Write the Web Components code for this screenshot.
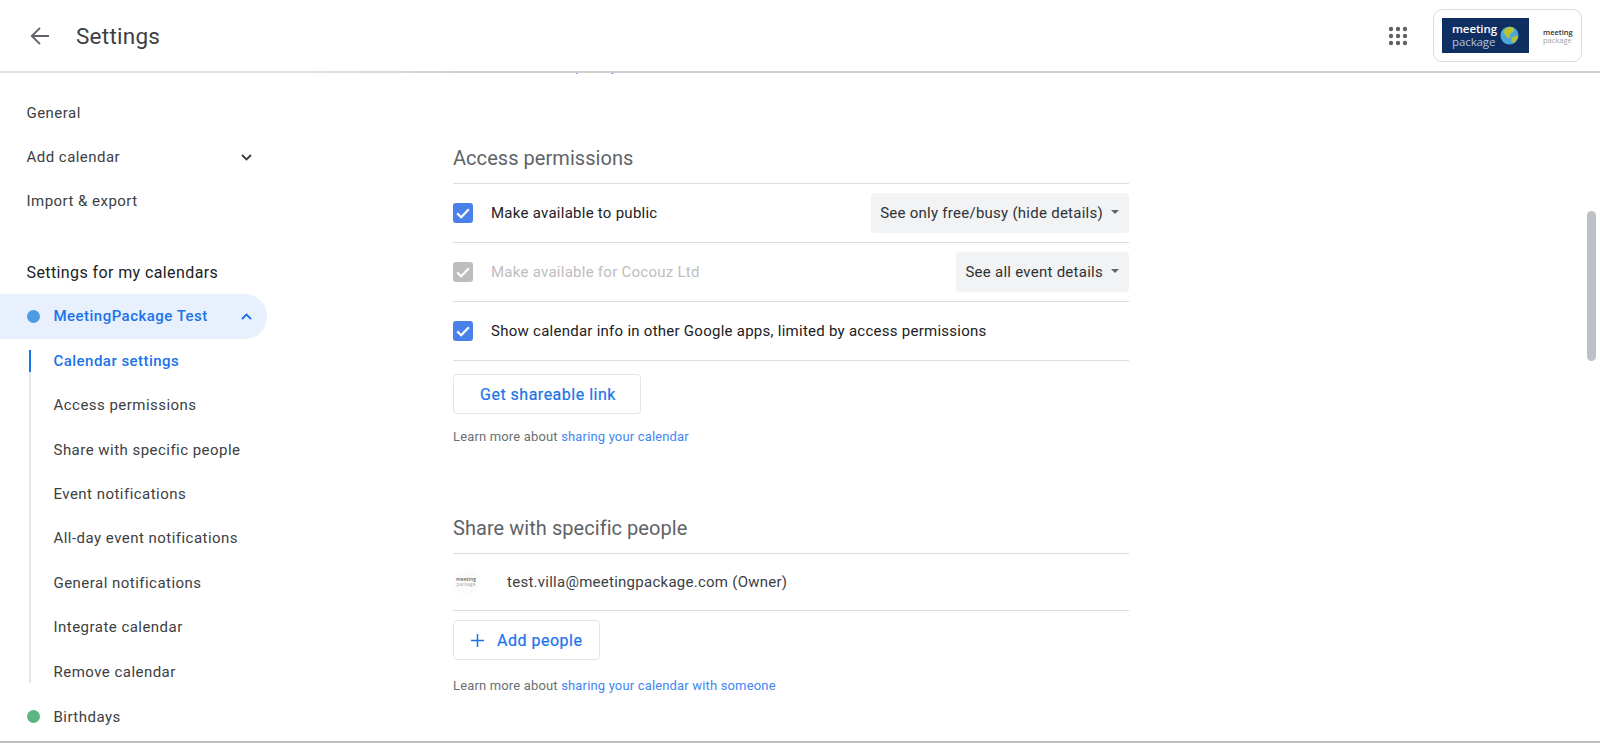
<!DOCTYPE html>
<html lang="en">
<head>
<meta charset="utf-8">
<title>Settings</title>
<style>
    html, body { margin: 0; height: 100%; overflow: hidden; background: #fff; }
    body { font-family: Roboto, "Liberation Sans", sans-serif; }
</style>
</head>
<body>
<settings-app>
    <settings-header slot="header"></settings-header>
    <settings-sidebar slot="sidebar">
        <nav-item>General</nav-item>
        <nav-item chevron="down">Add calendar</nav-item>
        <nav-item>Import &amp; export</nav-item>
        <nav-title>Settings for my calendars</nav-title>
        <nav-item dot="#4b9ce2" chevron="up" active>MeetingPackage Test</nav-item>
        <nav-group>
            <nav-item sub current>Calendar settings</nav-item>
            <nav-item sub>Access permissions</nav-item>
            <nav-item sub>Share with specific people</nav-item>
            <nav-item sub>Event notifications</nav-item>
            <nav-item sub>All-day event notifications</nav-item>
            <nav-item sub>General notifications</nav-item>
            <nav-item sub>Integrate calendar</nav-item>
            <nav-item sub>Remove calendar</nav-item>
        </nav-group>
        <nav-item dot="#5ab580">Birthdays</nav-item>
    </settings-sidebar>
    <settings-main slot="main">
        <settings-section heading="Access permissions" style="margin-top:67px">
            <perm-row>
                <g-check slot="check" checked></g-check>
                Make available to public
                <g-select slot="action">See only free/busy (hide details)</g-select>
            </perm-row>
            <perm-row disabled>
                <g-check slot="check" disabled></g-check>
                Make available for Cocouz Ltd
                <g-select slot="action">See all event details</g-select>
            </perm-row>
            <perm-row>
                <g-check slot="check" checked></g-check>
                Show calendar info in other Google apps, limited by access permissions
            </perm-row>
            <g-button>Get shareable link</g-button>
            <learn-more gap="14">sharing your calendar</learn-more>
        </settings-section>
        <settings-section heading="Share with specific people">
            <owner-row>test.villa@meetingpackage.com (Owner)</owner-row>
            <g-button plus>Add people</g-button>
            <learn-more gap="16.5">sharing your calendar with someone</learn-more>
        </settings-section>
    </settings-main>
</settings-app>

<script>
class SettingsApp extends HTMLElement {
    constructor() {
        super();
        this.attachShadow({mode: "open"}).innerHTML = `
        <style>
            :host {
                display: flex;
                flex-direction: column;
                height: 743px;
                box-sizing: border-box;
                border-bottom: 2px solid #bdbdbd;
                position: relative;
                overflow: hidden;
            }
            .body { flex: 1; display: flex; min-height: 0; }
            .thumb {
                position: absolute;
                left: 1587px;
                top: 211px;
                width: 9px;
                height: 150px;
                border-radius: 5px;
                background: #bdc1c6;
            }
        </style>
        <slot name="header"></slot>
        <div class="body">
            <slot name="sidebar"></slot>
            <slot name="main"></slot>
        </div>
        <div class="thumb"></div>`;
    }
}

class SettingsHeader extends HTMLElement {
    constructor() {
        super();
        this.attachShadow({mode: "open"}).innerHTML = `
        <style>
            :host {
                display: flex;
                align-items: center;
                height: 71px;
                flex: none;
                padding: 0 18px 0 30px;
                border-bottom: 2px solid;
                border-image: linear-gradient(90deg, #e3e3e3 0%, #e3e3e3 18%, #cfcfcf 30%, #cfcfcf 100%) 1;
            }
            .back { width: 20px; height: 20px; margin-right: 26px; }
            h1 {
                margin: 0;
                flex: 1;
                font: 400 22.5px/30px Roboto, sans-serif;
                letter-spacing: .25px;
                color: #3c4043;
            }
            .apps { width: 20px; height: 20px; margin-right: 25px; }
            .account {
                width: 149px;
                height: 53px;
                box-sizing: border-box;
                border: 1px solid #dadce0;
                border-radius: 9px;
                display: flex;
                align-items: center;
                padding-left: 8px;
            }
            .brand {
                width: 87px;
                height: 35px;
                background: #0f2f63;
                display: flex;
                align-items: center;
                padding-left: 10px;
                box-sizing: border-box;
                gap: 3px;
            }
            .brand svg { width: 19px; height: 19px; flex: none; }
            .words { font: 600 11.5px/12.5px "Open Sans", sans-serif; color: #fff; letter-spacing: -.1px; }
            .words span { display: block; font-weight: 400; color: #b4c2d8; }
            .small {
                margin-left: 14px;
                font: 600 7.5px/8px "Open Sans", sans-serif;
                color: #333;
            }
            .small span { display: block; font-weight: 400; color: #a5a5a5; }
        </style>
        <svg class="back" viewBox="0 0 20 20" fill="none" stroke="#5f6368" stroke-width="1.9">
            <path d="M19 10H2.5M10 1.8L1.8 10l8.2 8.2"/>
        </svg>
        <h1>Settings</h1>
        <svg class="apps" viewBox="0 0 20 20" fill="#5f6368">
            <circle cx="3" cy="3" r="2.2"/><circle cx="10" cy="3" r="2.2"/><circle cx="17" cy="3" r="2.2"/>
            <circle cx="3" cy="10" r="2.2"/><circle cx="10" cy="10" r="2.2"/><circle cx="17" cy="10" r="2.2"/>
            <circle cx="3" cy="17" r="2.2"/><circle cx="10" cy="17" r="2.2"/><circle cx="17" cy="17" r="2.2"/>
        </svg>
        <div class="account">
            <div class="brand">
                <div class="words">meeting<span>package</span></div>
                <svg viewBox="0 0 20 20">
                    <circle cx="10" cy="10" r="9.5" fill="#4ea6d8"/>
                    <path d="M3 6c2-4 7-6 11-4.5L15 5l-3 3-2 1 1 3-3 1-2-3zM12 12l6-2 1 2-4 6-3-2z" fill="#b4c23c"/>
                </svg>
            </div>
            <div class="small">meeting<span>package</span></div>
        </div>`;
    }
}

class SettingsSidebar extends HTMLElement {
    constructor() {
        super();
        this.attachShadow({mode: "open"}).innerHTML = `
        <style>
            :host {
                display: block;
                flex: none;
                width: 300px;
                padding-top: 17.5px;
                box-sizing: border-box;
            }
        </style>
        <slot></slot>`;
    }
}

class NavItem extends HTMLElement {
    constructor() {
        super();
        this.attachShadow({mode: "open"});
    }
    connectedCallback() {
        const dot = this.getAttribute("dot");
        const chevron = this.getAttribute("chevron");
        const path = chevron === "up" ? "M2 8l4.5-4.5L11 8" : "M2 3l4.5 4.5L11 3";
        this.shadowRoot.innerHTML = `
        <style>
            :host {
                display: flex;
                align-items: center;
                width: 267px;
                height: 44.4px;
                box-sizing: border-box;
                padding: 0 14px 0 26.5px;
                font: 400 15px/20px Roboto, sans-serif;
                letter-spacing: .47px;
                color: #3c4043;
            }
            :host([sub]), :host([dot]) { padding-left: 53.5px; position: relative; }
            :host([active]) {
                background: #e8f0fe;
                border-radius: 0 22px 22px 0;
                color: #1a73e8;
                font-weight: 500;
            }
            :host([current]) { color: #1a73e8; font-weight: 500; }
            .text { flex: 1; }
            .dot {
                position: absolute;
                left: 27px;
                top: 15.7px;
                width: 13px;
                height: 13px;
                border-radius: 50%;
            }
            svg { width: 13px; height: 11px; fill: none; stroke: currentColor; stroke-width: 1.9; }
        </style>
        ${dot ? `<span class="dot" style="background:${dot}"></span>` : ""}
        <span class="text"><slot></slot></span>
        ${chevron ? `<svg viewBox="0 0 13 11"><path d="${path}"/></svg>` : ""}`;
    }
}

class NavTitle extends HTMLElement {
    constructor() {
        super();
        this.attachShadow({mode: "open"}).innerHTML = `
        <style>
            :host {
                display: flex;
                align-items: center;
                height: 44.4px;
                box-sizing: border-box;
                padding-top: 2px;
                margin-top: 26.2px;
                padding-left: 26.5px;
                font: 400 16px/20px Roboto, sans-serif;
                letter-spacing: .4px;
                color: #202124;
            }
        </style>
        <slot></slot>`;
    }
}

class NavGroup extends HTMLElement {
    constructor() {
        super();
        this.attachShadow({mode: "open"}).innerHTML = `
        <style>
            :host { display: block; position: relative; margin-bottom: 1px; }
            .rail {
                position: absolute;
                left: 29px;
                top: 11.5px;
                width: 2px;
                height: 333px;
                background: #e3e7ed;
            }
            .mark {
                position: absolute;
                left: 29px;
                top: 11.5px;
                width: 2px;
                height: 22px;
                background: #1a73e8;
            }
        </style>
        <div class="rail"></div>
        <div class="mark"></div>
        <slot></slot>`;
    }
}

class SettingsMain extends HTMLElement {
    constructor() {
        super();
        this.attachShadow({mode: "open"}).innerHTML = `
        <style>
            :host {
                display: block;
                flex: 1;
                min-width: 0;
                padding-left: 153px;
            }
            .column { width: 676px; }
            /* bottom of the line above, mostly scrolled away under the header */
            .clipped { height: 3px; overflow: hidden; font: 400 13px/18px Roboto, sans-serif; letter-spacing: .16px; color: #5f6368; }
            .clipped div { margin-top: -15px; }
            .clipped span { color: #4285f4; }
        </style>
        <div class="column">
            <div class="clipped"><div>Learn more about <span>in privacy</span></div></div>
            <slot></slot>
        </div>`;
    }
}

class SettingsSection extends HTMLElement {
    constructor() {
        super();
        this.attachShadow({mode: "open"});
    }
    connectedCallback() {
        this.shadowRoot.innerHTML = `
        <style>
            :host { display: block; margin-top: 67px; }
            h2 {
                margin: 0;
                padding: 1px 0 11px;
                border-bottom: 1px solid #dadce0;
                font: 400 20px/28px Roboto, sans-serif;
                letter-spacing: .05px;
                color: #5f6368;
            }
        </style>
        <h2>${this.getAttribute("heading")}</h2>
        <slot></slot>`;
    }
}

class PermRow extends HTMLElement {
    constructor() {
        super();
        this.attachShadow({mode: "open"}).innerHTML = `
        <style>
            :host {
                display: flex;
                align-items: center;
                height: 59px;
                box-sizing: border-box;
                border-bottom: 1px solid #dadce0;
                font: 400 15px/20px Roboto, sans-serif;
                letter-spacing: .26px;
                color: #202124;
            }
            :host([disabled]) .label { color: #bdbdbd; }
            .label { flex: 1; margin-left: 18px; }
        </style>
        <slot name="check"></slot>
        <span class="label"><slot></slot></span>
        <slot name="action"></slot>`;
    }
}

class GCheck extends HTMLElement {
    constructor() {
        super();
        this.attachShadow({mode: "open"}).innerHTML = `
        <style>
            :host {
                display: block;
                flex: none;
                width: 20px;
                height: 20px;
                border-radius: 3px;
                background: #4a80ea;
            }
            :host([disabled]) { background: #bdbdbd; }
            svg { display: block; width: 20px; height: 20px; fill: none; stroke: #fff; stroke-width: 2.2; }
        </style>
        <svg viewBox="0 0 20 20"><path d="M4.2 10.4l4 3.8 7.6-8"/></svg>`;
    }
}

class GSelect extends HTMLElement {
    constructor() {
        super();
        this.attachShadow({mode: "open"}).innerHTML = `
        <style>
            :host {
                display: flex;
                align-items: center;
                height: 40px;
                padding: 0 10px 0 9px;
                gap: 8px;
                border-radius: 4px;
                background: #f1f3f4;
                color: #303134;
            }
            i { width: 0; height: 0; border: 4.5px solid transparent; border-top: 4.5px solid #5f6368; border-bottom: 0; margin-top: -3px; }
        </style>
        <slot></slot><i></i>`;
    }
}

class GButton extends HTMLElement {
    constructor() {
        super();
        this.attachShadow({mode: "open"});
    }
    connectedCallback() {
        const plus = this.hasAttribute("plus");
        this.shadowRoot.innerHTML = `
        <style>
            :host {
                display: flex;
                align-items: center;
                width: max-content;
                height: 40px;
                box-sizing: border-box;
                margin-top: ${plus ? 9 : 13}px;
                padding: 2px ${plus ? 17 : 24}px 0 ${plus ? 16 : 26}px;
                gap: 12px;
                border: 1px solid #e3e5e8;
                border-radius: 4px;
                font: 400 16px/20px Roboto, sans-serif;
                letter-spacing: .5px;
                color: #1a73e8;
                -webkit-text-stroke: .2px #1a73e8;
            }
            svg { width: 15px; height: 15px; fill: none; stroke: #1a73e8; stroke-width: 1.5; margin-top: -2px; }
        </style>
        ${plus ? `<svg viewBox="0 0 15 15"><path d="M7.5 1v13M1 7.5h13"/></svg>` : ""}
        <slot></slot>`;
    }
}

class LearnMore extends HTMLElement {
    constructor() {
        super();
        this.attachShadow({mode: "open"});
    }
    connectedCallback() {
        this.shadowRoot.innerHTML = `
        <style>
            :host {
                display: block;
                margin-top: ${this.getAttribute("gap")}px;
                font: 400 13px/18px Roboto, sans-serif;
                letter-spacing: .16px;
                color: #6b6f73;
            }
            a { color: #4285f4; text-decoration: none; }
        </style>
        Learn more about <a href="#"><slot></slot></a>`;
    }
}

class OwnerRow extends HTMLElement {
    constructor() {
        super();
        this.attachShadow({mode: "open"}).innerHTML = `
        <style>
            :host {
                display: flex;
                align-items: center;
                height: 57px;
                box-sizing: border-box;
                border-bottom: 1px solid #dadce0;
                font: 400 15px/20px Roboto, sans-serif;
                letter-spacing: .26px;
                color: #3c4043;
            }
            .avatar {
                flex: none;
                width: 26px;
                height: 26px;
                margin-right: 28px;
                border-radius: 50%;
                display: flex;
                flex-direction: column;
                align-items: center;
                justify-content: center;
                font: 600 5px/5px "Open Sans", sans-serif;
                letter-spacing: 0;
                color: #666;
                background: #fcfcfc;
            }
            .avatar span { color: #aaa; font-weight: 400; }
        </style>
        <div class="avatar">meeting<span>package</span></div>
        <slot></slot>`;
    }
}

customElements.define("settings-app", SettingsApp);
customElements.define("settings-header", SettingsHeader);
customElements.define("settings-sidebar", SettingsSidebar);
customElements.define("nav-item", NavItem);
customElements.define("nav-title", NavTitle);
customElements.define("nav-group", NavGroup);
customElements.define("settings-main", SettingsMain);
customElements.define("settings-section", SettingsSection);
customElements.define("perm-row", PermRow);
customElements.define("g-check", GCheck);
customElements.define("g-select", GSelect);
customElements.define("g-button", GButton);
customElements.define("learn-more", LearnMore);
customElements.define("owner-row", OwnerRow);
</script>
</body>
</html>
